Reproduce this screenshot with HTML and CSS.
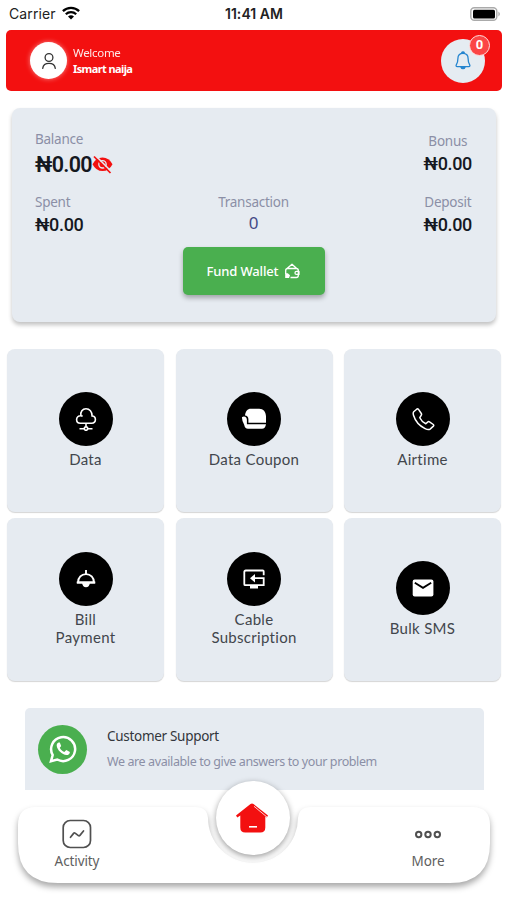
FILE: index.html
```html
<!DOCTYPE html>
<html lang="en">
<head>
<meta charset="utf-8">
<title>Wallet</title>
<link rel="stylesheet" href="styles.css">
</head>
<body>
<div class="screen">
  <div class="status">
    <div class="carrier"><span>Carrier</span>
      <svg width="18" height="14" viewBox="0 0 18 14" fill="none" stroke="#000"><path d="M.9 5.2A11.7 11.7 0 0 1 17.1 5.2" stroke-width="2.3"/><path d="M3.8 8.2A7.4 7.4 0 0 1 14.2 8.2" stroke-width="2.2"/><path d="M9 13.6 6 10.6a4.3 4.3 0 0 1 6 0Z" fill="#000" stroke="none"/></svg>
    </div>
    <div class="clock">11:41 AM</div>
    <svg class="battery" width="31" height="14" viewBox="0 0 31 14"><rect x=".8" y=".8" width="26" height="12.4" rx="3.5" fill="#fff" stroke="#aaa" stroke-width="1.4"/><rect x="3" y="2.8" width="22" height="8.6" rx="1.5"/><path d="M28.5 4.5q2.5 2.5 0 5Z" fill="#999"/></svg>
  </div>

  <header class="header">
    <div class="avatar"><svg width="18" height="18" viewBox="0 0 18 18" fill="none" stroke="#333" stroke-width="1.3" stroke-linecap="round"><circle cx="9" cy="5.5" r="3.9"/><path d="M2.7 16.3c.5-3.6 3-4.9 6.300-4.900s5.800 1.300 6.300 4.900"/></svg></div>
    <div class="greeting"><div class="hello">Welcome</div><div class="user">Ismart naija</div></div>
    <div class="bell">
      <svg width="16" height="20" viewBox="0 0 16 20" fill="none" stroke="#2585cf" stroke-width="1.3" stroke-linejoin="round"><path d="M8 2.300C4.500 2.300 2.900 4.500 2.900 7.500c0 3.500-.5 4.700-1.600 6.300-.5.900-.2 1.900.9 1.900h11.600c1.100 0 1.400-1 .9-1.900-1.100-1.600-1.600-2.800-1.600-6.300 0-3-1.600-5.200-5.100-5.200Z"/><path d="M6.600 2.200a1.400 1.400 0 0 1 2.800 0M6 16.200a2.100 2.100 0 0 0 4 0Z" fill="#2585cf"/></svg>
      <span class="badge">0</span>
    </div>
  </header>

  <section class="wallet">
    <div class="figures">
      <div class="figure"><div class="label">Balance</div><div class="amount big"><span>₦0.00</span><svg width="21" height="19" viewBox="0 0 21 19"><path d="M.5 9.200Q4 2.500 10.500 2.500T20.500 9.200Q17 16 10.500 16T.5 9.200Z" fill="#f31010"/><circle cx="10.500" cy="9.300" r="3.700" fill="none" stroke="#e5eaf0" stroke-width="1.300"/><path d="M3.200.4 19.300 16.500" stroke="#e5eaf0" stroke-width="1.700"/><path d="M2 1.500 18.500 18" stroke="#f31010" stroke-width="1.700"/></svg></div></div>
      <div></div>
      <div class="figure end bonus"><div class="label">Bonus</div><div class="amount">₦0.00</div></div>
      <div class="figure"><div class="label">Spent</div><div class="amount">₦0.00</div></div>
      <div class="figure mid"><div class="label">Transaction</div><div class="count">0</div></div>
      <div class="figure end"><div class="label">Deposit</div><div class="amount">₦0.00</div></div>
    </div>
    <div class="fund"><span>Fund Wallet</span>
      <svg width="16" height="16" viewBox="0 0 16 16" fill="none" stroke="#fff" stroke-width="1.300" stroke-linejoin="round"><path d="M1.700 11V7.500q0-2 2-2h8.600q2 0 2 2v5q0 2-2 2H6.500M3 5.600 8 1.200l4.700 4.300M15 8.400h-2.500a1.500 1.500 0 0 0 0 3H15Z"/><path d="M1.200 10.200h2.600l2.200 2-1 2.800H1.200Z" fill="#fff" stroke="none"/></svg>
    </div>
  </section>

  <main class="tiles">
    <div class="tile"><div class="disc"><svg width="24" height="24" viewBox="0 0 24 24" fill="none" stroke="#fff" stroke-width="1.600"><path d="M6.300 16.200h11.300c2.100 0 3.800-1.500 3.800-3.600 0-2-1.400-3.500-3.300-3.600C18.200 4.700 15.500 1.800 12 1.800S6.200 4.800 6.900 8.700C4.300 8.600 2.600 10.300 2.600 12.500s1.700 3.700 3.700 3.700ZM6.900 8.700q1 .1 1.700.7M12 16.200v3.500M5.500 21.700h4.600M13.900 21.700h4.600"/><circle cx="12" cy="21.600" r="1.700"/></svg></div><div class="name">Data</div></div>
    <div class="tile"><div class="disc"><svg width="28" height="24" viewBox="0 0 28 24"><path d="M5 8.600C5.500 4.300 7.500 1.700 10.800 1.700h8.400c4.200 0 6.600 3 6.800 7.500V15.700H8.400V12Q8.100 8.900 5 8.600Z" fill="#fff"/><path d="M1.900 10.300Q3.500 9 5.300 9.800 6.900 10.600 6.900 12.800V17.200H26q-.8 4.500-4 4.500H8q-3.200 0-3.800-4Q2 14.200 1.900 10.300Z" fill="#fff"/></svg></div><div class="name">Data Coupon</div></div>
    <div class="tile"><div class="disc"><svg width="24" height="24" viewBox="0 0 24 24" fill="none" stroke="#fff" stroke-width="1.500" stroke-linejoin="round"><path d="m5.700 2.200-3 2.600q-.9 1-.2 3.400 2.700 8.900 11.600 13.400 3.200 1.700 5 .5l3.300-3q.8-.8-.1-1.600l-3.800-2.600q-1-.7-1.900.2l-1.800 1.600q-4.100-1.900-6-6l1.400-2.400q.7-.9.1-1.800L7.500 2.400q-.8-1-1.800-.2Z"/></svg></div><div class="name">Airtime</div></div>
    <div class="tile"><div class="disc"><svg width="24" height="24" viewBox="0 0 24 24"><path d="M12 3v4M4 15.500C4 10.300 7.500 7.100 12 7.100s8 3.200 8 8.400Z" fill="none" stroke="#fff" stroke-width="1.900"/><path d="M2.700 14.500h18.600v2.100H2.700ZM8 16h8q-.8 4.200-4 4.200T8 16Z" fill="#fff"/></svg></div><div class="name">Bill<br>Payment</div></div>
    <div class="tile"><div class="disc"><svg width="24" height="24" viewBox="0 0 24 24" fill="none" stroke="#fff" stroke-width="1.800"><path d="M21.700 8.200V4.500q0-1-1-1H3.800q-1.500 0-1.500 1.500v12.200q0 1 1 1h18.400v-7H10.500"/><path d="m13 7-5 4.200 5 4.200Z" fill="#fff" stroke="none"/><path d="M8 20h8" stroke-width="3"/></svg></div><div class="name">Cable<br>Subscription</div></div>
    <div class="tile"><div class="disc"><svg width="24" height="24" viewBox="0 0 24 24"><rect x="1.700" y="3.500" width="20.700" height="17" rx="2" fill="#fff"/><path d="m3.800 6.700 8.200 5.100 8.200-5.100" fill="none" stroke="#000" stroke-width="1.900"/></svg></div><div class="name">Bulk SMS</div></div>
  </main>

  <section class="support">
    <div class="whatsapp"><svg width="28" height="28" viewBox="0 0 28 28"><path d="M2 26.200 3.700 20A12 12 0 1 1 8.200 24.500Z" fill="none" stroke="#fff" stroke-width="2.500"/><path d="M9.600 7.500c-1.100.3-2 1.600-1.900 3.100.3 4.400 5.400 9.400 9.800 9.500 1.900 0 3.400-1.200 3.400-3.200l-3.600-1.900-2 2c-2.100-.9-3.500-2.300-4.500-4.300l1.400-1.700-1.400-3.400Z" fill="#fff"/></svg></div>
    <div class="copy"><div class="title">Customer Support</div><div class="sub">We are available to give answers to your problem</div></div>
  </section>

  <nav class="nav">
    <svg class="shape" width="472" height="78" viewBox="0 0 472 78"><path d="M18 2H177Q189 2 190 13A45 45 0 0 0 280 13Q281 2 293 2H454Q472 2 472 20V38Q472 78 432 78H40Q0 78 0 38V20Q0 2 18 2Z" fill="#fff"/></svg>
    <div class="item"><svg width="30" height="30" viewBox="0 0 30 30" fill="none" stroke="#505050" stroke-width="1.700" stroke-linecap="round" stroke-linejoin="round"><rect x="1.200" y="1.500" width="27.300" height="27" rx="7"/><path d="m8.500 18.300 3.300-4.200q.6-.7 1.300 0l3.300 2.500q.8.600 1.500-.2l3.600-4.400"/></svg><span>Activity</span></div>
    <div class="home"><svg width="36" height="32" viewBox="0 0 36 32"><path d="M5.300 13.500 2.300 15.500 1 13.600 15.500 2.100q1.500-1 3 0L33 13.600l-1.200 1.800-1.500-1V25.500q0 5-5 5H10.300q-5 0-5-5Z" fill="#f31010"/><path d="m19 4.300 13 10.800" fill="none" stroke="#fff" stroke-width=".8"/><path d="M14 24.800h8" fill="none" stroke="#fff" stroke-width="1.600"/></svg></div>
    <div class="item"><svg width="30" height="30" viewBox="0 0 30 30" fill="none" stroke="#505050" stroke-width="2"><circle cx="5.700" cy="15.500" r="2.700"/><circle cx="15" cy="15.500" r="2.700"/><circle cx="24.300" cy="15.500" r="2.700"/></svg><span>More</span></div>
  </nav>
</div>
</body>
</html>
```

FILE: styles.css
```css
* { box-sizing: border-box; }
body { margin: 0; background: #fff; font-family: "Noto Sans", sans-serif; color: #15181f; }
svg { display: block; flex: none; }
.screen { width: 507px; height: 900px; overflow: hidden; display: flex; flex-direction: column; }
.status { height: 30px; flex: none; display: grid; grid-template-columns: 1fr auto 1fr; align-items: center; padding: 0 6px 3px 9px; font: 14px/20px Inter, sans-serif; color: #222; }
.carrier { display: flex; gap: 6px; align-items: center; letter-spacing: .1px; }
.carrier svg { margin-top: -2px; }
.clock { font-weight: 600; letter-spacing: .05px; position: relative; left: -1px; }
.battery { justify-self: end; }
.header { height: 61px; flex: none; margin: 0 5px 0 6px; border-radius: 5px; background: #f31010; display: flex; align-items: center; padding: 0 17px 0 24px; }
.avatar { width: 37px; height: 37px; border-radius: 50%; background: #fff; display: grid; place-items: center; box-shadow: 0 0 5px rgba(255,255,255,.5); }
.greeting { flex: 1; margin-left: 6px; color: #fff; font-size: 11.500px; line-height: 15.500px; letter-spacing: -.3px; }
.hello { opacity: .9; }
.user { font-weight: 700; font-size: 11px; letter-spacing: -.6px; }
.bell { width: 44px; height: 44px; border-radius: 50%; background: #e5ecf2; display: grid; place-items: center; position: relative; }
.badge { position: absolute; right: -5px; top: -4px; width: 21px; height: 21px; border: 1.500px solid #ffdede; border-radius: 50%; background: #fb4545; color: #fff; font: 700 13px/18px Roboto, sans-serif; text-align: center; }
.wallet { height: 214px; flex: none; margin: 17px 11px 0 12px; border-radius: 8px; background: #e6ebf1; box-shadow: 0 3px 4px rgba(0,0,0,.24); padding: 20px 24px 0 23px; }
.figures { display: grid; grid-template-columns: 1fr auto 1fr; grid-template-rows: 63px 56px; }
.label { font-size: 13.500px; line-height: 22px; color: #8b8fa6; letter-spacing: -.25px; }
.amount { font: 500 18px/24px Roboto, sans-serif; letter-spacing: -.35px; }
.big { display: flex; align-items: center; font-size: 21.500px; line-height: 28px; font-weight: 600; letter-spacing: -.7px; }
.big span { padding-top: 1px; }
.end { justify-self: end; text-align: center; }
.bonus { padding-top: 2px; }
.mid { text-align: center; }
.count { font-size: 17px; line-height: 20px; color: #454a86; }
.fund { width: 142px; height: 48px; margin: 0 auto; border-radius: 5px; background: #4aaf4f; color: #fff; display: flex; align-items: center; justify-content: center; gap: 6px; font-size: 13px; font-weight: 500; letter-spacing: -.15px; box-shadow: 0 3px 5px rgba(0,0,0,.3); }
.tiles { flex: none; display: grid; grid-template-columns: repeat(3, 157px); grid-auto-rows: 163px; column-gap: 11.500px; row-gap: 6px; margin: 27px 0 0 7px; }
.tile { border-radius: 8px; background: #e6ebf1; box-shadow: 0 1px 1px rgba(0,0,0,.17); display: flex; flex-direction: column; align-items: center; justify-content: center; padding-bottom: 1px; }
.disc { width: 54px; height: 54px; border-radius: 50%; background: #000; display: grid; place-items: center; }
.name { margin-top: 4px; text-align: center; font: 15px/18.500px Lato, sans-serif; color: #42464c; letter-spacing: .3px; }
.support { height: 82px; flex: none; margin: 27px 23.500px 0 25px; background: #e6ebf1; border-radius: 5px 5px 0 0; display: flex; align-items: center; padding-left: 13px; }
.whatsapp { width: 49px; height: 49px; border-radius: 50%; background: #4aaf4f; display: grid; place-items: center; }
.copy { margin: -1px 0 0 20px; white-space: nowrap; }
.title { font-size: 13.500px; line-height: 26px; color: #33363c; letter-spacing: -.3px; }
.sub { font-size: 12.500px; line-height: 26px; color: #8b8fa6; letter-spacing: -.4px; }
.nav { position: relative; width: 472px; height: 78px; flex: none; margin: 15px 0 0 18px; display: grid; grid-template-columns: 118px 1fr 124px; }
.shape { position: absolute; inset: 0; overflow: visible; filter: drop-shadow(0 4px 3px rgba(0,0,0,.34)); }
.item { position: relative; display: flex; flex-direction: column; align-items: center; padding-top: 14px; font-size: 13.500px; line-height: 25px; color: #606060; letter-spacing: -.1px; }
.home { position: relative; width: 74px; height: 74px; margin-top: -24px; justify-self: center; left: 2px; border-radius: 50%; background: #fff; display: grid; place-items: center; box-shadow: 0 2px 6px rgba(0,0,0,.4); }
```
